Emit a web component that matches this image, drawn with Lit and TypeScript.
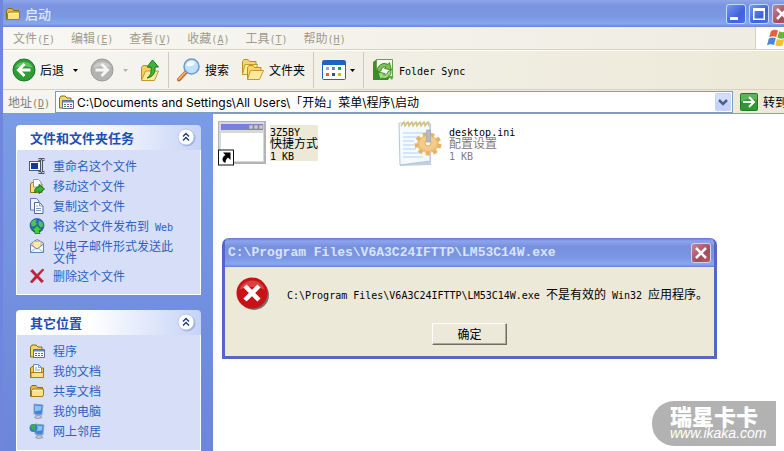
import { LitElement, html, css, svg, TemplateResult } from "lit";
import { customElement } from "lit/decorators.js";

/** Sets runs of Latin text in the half-width face, next to full-width Chinese. */
const mix = (text: string) =>
  text
    .split(/([\x20-\x7e]+)/)
    .filter((part) => part)
    .map((part) => (/^[\x20-\x7e]/.test(part) ? html`<span class="en">${part}</span>` : part));

const icon = (w: number, h: number, body: TemplateResult) =>
  html`<svg class="icon" width=${w} height=${h} viewBox="0 0 ${w} ${h}" aria-hidden="true">${body}</svg>`;

const folderShape = svg`
  <path d="M1.5 13.5V4.5L3 2.5h4l1.500 2h5v9z" fill="#e9b93c" stroke="#8f6a12"/>
  <path d="M2.500 13.500V7.500L4 6h10.500v6l-1 1.500z" fill="#fbe283" stroke="#a67c1c"/>
  <path d="M4 7.500h9" stroke="#fff6c4"/>`;

const programsShape = svg`
  <path d="M1.500 14V4L3 2h4l2 2h4v10z" fill="#f6d568" stroke="#8f6a12"/>
  <path d="M4.500 6.500h11v8h-11z" fill="#fff" stroke="#5f6f8f"/>
  <path d="M5 7h10v1.500H5z" fill="#5b8be0"/>
  <path d="M6 10h2v1H6zM6 12h2v1H6z" fill="#4f8f4f"/><path d="M9 10h2v1H9zM12 12h2v1h-2z" fill="#d0503c"/>
  <path d="M12 10h2v1h-2zM9 12h2v1H9z" fill="#4060c0"/>`;

const monitor = svg`
  <path d="M5 1l9 1-1.200 10-7.800-1z" fill="#3d86dd" stroke="#8fa2c4"/>
  <path d="M6 2.500l6.500.8-.6 4-5.900 1z" fill="#8cc4f8"/>
  <path d="M7 12l4 .3.5 1.200 1.500 1-5 1.300-2.500-1.500 1.500-.6z" fill="#c3c8d4" stroke="#70789a" stroke-width=".6"/>`;

const icons = {
  folder: () => icon(16, 16, folderShape),
  programs: () => icon(16, 16, programsShape),
  documents: () => icon(16, 16, svg`
    <path d="M1.500 14.500V5L3 3.500h2V14zM12 5h2.500v9.500h-13" fill="#f0c850" stroke="#8f6a12"/>
    <path d="M4.500 1.500h5l3 3v7h-8z" fill="#fff" stroke="#6f8fc0"/>
    <path d="M9.500 1.500v3h3M6 5h2M6 7h5" fill="none" stroke="#78a4e0"/>
    <path d="M2 9.500h12.500v5H2z" fill="#fbe283" stroke="#a67c1c"/>`),
  computer: () => icon(16, 16, monitor),
  network: () => icon(16, 16, svg`
    <g transform="translate(1 0)">${monitor}</g>
    <circle cx="4.500" cy="5" r="4" fill="#2f7fd0"/>
    <path d="M1 3.500c2-3 5-3 6-1.500L5.500 4l1.500 2-2 2.500L3.500 6z" fill="#3fae4a"/>`),
  rename: () => icon(16, 16, svg`
    <rect x=".5" y="3.500" width="11" height="9" fill="#fff" stroke="#4b5a7a"/>
    <rect x="2" y="5" width="7" height="6" fill="#123a9c"/>
    <path d="M9.500 1.500h2l1 1 1-1h2M12.500 3v11M9.500 14.500h2l1-1 1 1h2" fill="none" stroke="#4a5468" stroke-width="3"/>
    <path d="M9.500 1.500h2l1 1 1-1h2M12.500 3v11M9.500 14.500h2l1-1 1 1h2" fill="none" stroke="#c8d0e0"/>`),
  move: () => icon(16, 16, svg`
    <path d="M1.500 14.500v-9l1.500-1h3l1 1.500h6v8.500z" fill="#f9dd7c" stroke="#9a7420"/>
    <path d="M4.500 1.500h5l2.500 2.500v5H4.500z" fill="#fff" stroke="#8c9cb8"/>
    <path d="M6 15c-1-4 1-6 4-6V6.500l5.500 4.500L10 15.500V13c-2 0-3 .5-4 2z" fill="#35b62f" stroke="#166c17"/>`),
  copy: () => icon(16, 16, svg`
    <path d="M1.500 .5h6l2.500 2.500v9h-8.500z" fill="#eef4ff" stroke="#5d7aa8"/>
    <path d="M5.500 4.500h5l3.500 3.500v7.500H5.500z" fill="#fff" stroke="#4d6a9c"/>
    <path d="M10.500 4.500v3.500H14M7 8h2M7 10.500h5M7 12.500h5" fill="none" stroke="#7b9dd4"/>`),
  publish: () => icon(16, 16, svg`
    <circle cx="8" cy="7.500" r="7" fill="#2866c4" stroke="#1d4a8c" stroke-width=".7"/>
    <path d="M2 5c1-3 4-4 6-3.500L6.500 4l1.500 2-3 2.500L2.500 8zM10 2.500l3.500 2 1 3.500-3 1.500-2-3z" fill="#4fc256"/>
    <path d="M8 7.500l5 5h-2.800c0 1.500.4 2.300 1 3H6c-.6-1-.6-2-.5-3H3z" fill="#46cf3c" stroke="#17741b" stroke-width=".8"/>`),
  mail: () => icon(16, 16, svg`
    <path d="M1.500 6L8 1.500 14.500 5v9l-13 .5z" fill="#dbe8fb" stroke="#6482b0"/>
    <path d="M4 3.500h8v6L8 11 4 9z" fill="#ffe9b0" stroke="#d9a24a" stroke-width=".7"/>
    <path d="M1.500 6.500L8 11l6.500-5v8.500h-13z" fill="#f1f7ff" stroke="#6482b0"/>
    <path d="M2 14l5-4M14 14L9 10" stroke="#9ab2d8"/>`),
  remove: () => icon(16, 16, svg`
    <path d="M1.500 3l2-1.500L8 6.500 13.500 1l1.500.8L9.500 8l5 5-1.800 1.800L8 9.800 3 15l-1.700-1.200L6.300 8z" fill="#cc1f35" stroke="#8c1020" stroke-width=".5"/>`),
  chevrons: () => icon(19, 19, svg`
    <circle cx="10" cy="10" r="8.500" fill="#9fb2e0"/>
    <circle cx="9" cy="9" r="8" fill="#fff" stroke="#b9c6ea"/>
    <path d="M6 8.500l3-3 3 3M6 12.500l3-3 3 3" fill="none" stroke="#24407c" stroke-width="1.500"/>`),
  back: () => icon(24, 24, svg`
    <circle cx="12" cy="12" r="11" fill="#2d9e33" stroke="#1d7424"/>
    <path d="M3 10a9.500 9 0 0 1 18 0c-5-2-12-2-18 0z" fill="#7ccf7a" opacity=".7"/>
    <path d="M12.500 6L6.500 12l6 6M7 12h11.500" fill="none" stroke="#fff" stroke-width="3"/>`),
  forward: () => icon(24, 24, svg`
    <circle cx="12" cy="12" r="11" fill="#b3b3b1" stroke="#9b9b99"/>
    <path d="M3 10a9.500 9 0 0 1 18 0c-5-2-12-2-18 0z" fill="#d2d2d0" opacity=".8"/>
    <path d="M11.500 6l6 6-6 6M17 12H5.500" fill="none" stroke="#f6f6f4" stroke-width="3"/>`),
  up: () => icon(20, 24, svg`
    <path d="M1.500 21.500V9.500L3 7.500h4l1.500 2h6v12z" fill="#f4cf5c" stroke="#b98e22"/>
    <path d="M1.500 22.500l4-9.500H18.500l-4 9.500z" fill="#fdea9c" stroke="#c49a2c"/>
    <path d="M7 20c4-2 4.500-7 4-11H7L12.500 2 18.500 9H15c.5 6-2 10-8 11z" fill="#3fb53a" stroke="#1b7a20"/>`),
  search: () => icon(24, 24, svg`
    <path d="M9 14l-7 7.500" stroke="#b9672c" stroke-width="4" stroke-linecap="round"/>
    <path d="M8.500 14l-6.500 7" stroke="#f0a866" stroke-width="2" stroke-linecap="round"/>
    <circle cx="14.500" cy="8.500" r="7.500" fill="#bfe0fb" stroke="#6f97cf" stroke-width="1.500"/>
    <path d="M9.500 8a5 5 0 0 1 9-3c-2 3-5 3.500-9 3z" fill="#fff" opacity=".85"/>`),
  folders: () => icon(24, 24, svg`
    <path d="M1.500 16.500V3.500L3 1.500h4l1.500 2H15v4l-3 9z" fill="#f6d468" stroke="#b98e22"/>
    <path d="M1.500 16.500L4 6.500h12.500l-3 10z" fill="#fdeaa0" stroke="#c49a2c"/>
    <path d="M6.500 21.500V9.500L8 7.500h4l1.500 2H20v4z" fill="#f6d468" stroke="#b98e22"/>
    <path d="M6.500 21.500l3-9h13l-4 9z" fill="#fdeaa0" stroke="#c49a2c"/>`),
  views: () => icon(24, 20, svg`
    <rect x=".5" y=".5" width="23" height="19" rx="1" fill="#fff" stroke="#2a62b8"/>
    <path d="M1 1h22v4H1z" fill="#1c62cc"/>
    <path d="M4 7h3v3H4z" fill="#a99ad0"/><path d="M10 7h3v3h-3z" fill="#6a86d8"/><path d="M16 7h3v3h-3z" fill="#2f9a3c"/>
    <path d="M4 13h3v3H4z" fill="#e2603c"/><path d="M10 13h3v3h-3z" fill="#234fae"/><path d="M16 13h3v3h-3z" fill="#d8b040"/>`),
  sync: () => icon(23, 24, svg`
    <path d="M1 4l4-3v17l-4 4z" fill="#3f8f2c"/>
    <path d="M4.500 1.500h16v17h-16z" fill="#f4faee" stroke="#5ea548"/>
    <path d="M1 22V7c4 6 9 10 17 12l-2 3z" fill="#3b8c2c"/>
    <path d="M5.500 14A7 7 0 0 1 16 6.500l1.500-2 2 7.500-7-1.500 1.500-1.500a4 4 0 0 0-5 4z" fill="#7cc24e" stroke="#2f7a24" stroke-width=".8"/>
    <path d="M19 12a7 7 0 0 1-9.500 8L8 21.500 6 14l7 1.500-1.500 1.500a4 4 0 0 0 4.500-3.500z" fill="#a6d977" stroke="#2f7a24" stroke-width=".8"/>
    <path d="M15 17l6.500 1.500L20 22z" fill="#58a83c"/>`),
  go: () => icon(18, 18, svg`
    <rect x=".5" y=".5" width="17" height="17" rx="1" fill="#2f9a34" stroke="#1f7a28"/>
    <path d="M1 1h16v6C11 5 6 6 1 9z" fill="#6cc068" opacity=".7"/>
    <path d="M9 4l5 5-5 5M13.500 9H3" fill="none" stroke="#fff" stroke-width="2"/>`),
  drop: () => icon(16, 18, svg`
    <rect width="16" height="18" rx="2" fill="#c3d3fb"/>
    <path d="M1 1h14v8H1z" fill="#d3defc"/>
    <path d="M4 7l4 4 4-4" fill="none" stroke="#4d6185" stroke-width="2.500"/>`),
  caret: () => icon(5, 3, svg`<path d="M0 0h5L2.500 3z" fill="currentColor"/>`),
  minimize: () => icon(20, 20, svg`<path d="M4 13h8v3H4z" fill="#fff"/>`),
  maximize: () => icon(20, 20, svg`<path d="M4 4h12v12H4zM5.500 7v7.500h9V7z" fill="#fff" fill-rule="evenodd"/>`),
  close: () => icon(20, 20, svg`<path d="M5 5l10 10M15 5L5 15" stroke="#fff" stroke-width="2.500"/>`),
  flag: () => icon(25, 20, svg`
    <path d="M5 3c3-2 5-1.500 7-.5l-1.800 6.500c-2-1-4-1.300-7 .2z" fill="#e8603c"/>
    <path d="M13.200 3.200c2.500 1.300 5 1.300 7.300 0L18.600 10c-2.500 1-4.500 1-7.200-.5z" fill="#6cb33e"/>
    <path d="M2.800 10.500c3-1.500 5-1 7-.2L8 17c-2-1-4-1.300-7 .2z" fill="#4a84dc"/>
    <path d="M11 10.700c2.500 1.300 5 1.300 7.300.2L16.500 17.500c-2.500 1-4.500 1-7.300-.3z" fill="#f3c02e"/>`),
  error: () => icon(34, 34, svg`
    <circle cx="18" cy="18" r="15" fill="#77716a"/>
    <circle cx="16" cy="16" r="15.500" fill="#c81218"/>
    <path d="M3 13a13.500 13 0 0 1 26 0c-7-4-19-4-26 0z" fill="#e8605c" opacity=".6"/>
    <path d="M9 9l14 14M23 9L9 23" stroke="#fff" stroke-width="4.500"/>`),
  shortcut: () => icon(48, 46, svg`
    <path d="M0 1h48v43H0z" fill="#b4b4b6"/>
    <path d="M1 2h45v40H1z" fill="#d8d8dc"/>
    <path d="M3 4h42v6H3z" fill="#7b7fdc"/>
    <path d="M31 5h4v4h-4zM36 5h4v4h-4zM41 5h4v4h-4z" fill="#c8c8cc" stroke="#8c8c94" stroke-width=".6"/>
    <path d="M3 13h42v28H3z" fill="#fff"/>
    <rect x=".5" y="30" width="15" height="15" fill="#fff" stroke="#111"/>
    <path d="M5 32.500h7.500V40l-2.500-2.500C8 39 7.500 40.500 7.500 43 3 41 4 37 7.500 35z" fill="#000"/>`),
  settings: () => icon(48, 48, svg`
    <path d="M3 4l31 1v41L3 47z" fill="#c4cede"/>
    <path d="M2 4h31v38L3 46z" fill="#f4faff" stroke="#b4c6e0"/>
    <path d="M6 14h23M6 18h15M6 22h11M6 26h11M6 30h13M6 34h17M6 38h20" stroke="#b4cff2"/>
    <path d="M4 7l3-4 1 4 3-4 1 4 3-4 1 4 3-4 1 4 3-4 1 4 3-4 1 4 3-4 1 4" fill="none" stroke="#d3c078" stroke-width="1.300"/>
    <ellipse cx="31" cy="25" rx="11" ry="9" fill="#efc27a"/>
    <ellipse cx="31" cy="25" rx="11.500" ry="9.500" fill="none" stroke="#e6b264" stroke-width="4" stroke-dasharray="4 3.360"/>
    <ellipse cx="31" cy="24" rx="8.500" ry="7" fill="#f3cc8a"/>
    <circle cx="31" cy="24" r="3" fill="#fbf2dc" stroke="#d6a456" stroke-width=".8"/>
    <path d="M29.500 11h4v12h-4z" fill="#b5bac6" stroke="#9aa0ae" stroke-width=".6"/>`),
};

const menus: [string, string][] = [
  ["文件", "F"], ["编辑", "E"], ["查看", "V"], ["收藏", "A"], ["工具", "T"], ["帮助", "H"],
];

const panels = [
  {
    title: "文件和文件夹任务",
    links: [
      [icons.rename, "重命名这个文件"],
      [icons.move, "移动这个文件"],
      [icons.copy, "复制这个文件"],
      [icons.publish, "将这个文件发布到 Web"],
      [icons.mail, "以电子邮件形式发送此文件"],
      [icons.remove, "删除这个文件"],
    ] as [() => TemplateResult, string][],
  },
  {
    title: "其它位置",
    links: [
      [icons.programs, "程序"],
      [icons.documents, "我的文档"],
      [icons.folder, "共享文档"],
      [icons.computer, "我的电脑"],
      [icons.network, "网上邻居"],
    ] as [() => TemplateResult, string][],
  },
];

const files = [
  { icon: icons.shortcut, name: "3Z5BY", kind: "快捷方式", size: "1 KB", selected: true },
  { icon: icons.settings, name: "desktop.ini", kind: "配置设置", size: "1 KB", selected: false },
];

@customElement("app-root")
export class AppRoot extends LitElement {
  static styles = css`
    :host {
      display: block;
      position: relative;
      min-height: 100vh;
      overflow: hidden;
      background: #fff;
      color: #000;
      font: 12px/16px "Noto Sans CJK SC", sans-serif;
    }
    * { box-sizing: border-box; }
    button {
      margin: 0; padding: 0; border: 0; background: none;
      color: inherit; font: inherit; white-space: nowrap;
    }
    a { color: inherit; text-decoration: none; }
    .icon { display: block; flex: none; }
    .en { font-family: "DejaVu Sans Mono", monospace; font-size: 10px; line-height: 0; }

    /* The window runs past the right edge of the screen. */
    .window {
      width: calc(100% + 16px);
      min-height: 100vh;
      display: flex;
      flex-direction: column;
      border: solid #6f86dc;
      border-width: 0 4px 0 3px;
    }
    .title {
      display: flex; align-items: center; gap: 4px;
      height: 27px; padding: 0 4px 0 2px;
      background: linear-gradient(#8fa6ea 0, #7b93e0 20%, #7c97e2 60%, #84a8ec 88%, #6c84cc 100%);
      color: #dfe8fb;
    }
    .title h1 { flex: 1; margin: 0; font-size: 13px; font-weight: 500; line-height: 20px; }
    .controls { display: flex; gap: 3px; }
    .control {
      width: 20px; height: 20px; overflow: hidden;
      display: grid; place-items: center;
      border-radius: 3px; box-shadow: inset 0 0 0 1px #c8d4f8;
      background: linear-gradient(135deg, #7c9cf0, #3f62dc 60%, #4a70e6);
    }
    .control.close { background: linear-gradient(135deg, #c98a9c, #a84a5c 60%, #b45c70); }

    .menubar {
      display: flex; align-items: stretch;
      height: 23px;
      background: linear-gradient(90deg, #f8f7f3, #eeece1);
      border-bottom: 1px solid #d8d2bd;
      color: #9f9b8e;
    }
    .menus { flex: 1; display: flex; gap: 16px; padding-left: 10px; }
    .brand { width: 41px; padding: 1px 10px; background: #fff; border-left: 1px solid #d8d2bd; }

    .toolbar {
      display: flex; align-items: center;
      height: 40px; padding-left: 9px;
      background: linear-gradient(90deg, #f6f5f1, #ece9d8);
      border-top: 1px solid #fff;
      border-bottom: 1px solid #d8d2bd;
    }
    .tool { display: flex; align-items: center; gap: 4px; height: 32px; }
    .tool.off { color: #b8b5a8; }
    .tool.list { padding: 0 12px 0 9px; }
    .tool.next { margin-left: 12px; }
    .rule { width: 1px; height: 36px; margin: 0 8px; background: #cfccbd; }

    .address {
      display: flex; align-items: center; gap: 5px;
      height: 23px; padding-left: 5px;
      background: linear-gradient(90deg, #f6f5f1, #ece9d8);
    }
    .address label { color: #858273; width: 42px; white-space: nowrap; }
    .combo {
      flex: 1; min-width: 0; height: 22px;
      display: flex; align-items: center; gap: 3px; padding: 0 1px 0 2px;
      background: #fff; border: 1px solid #7f9db9;
    }
    .combo input {
      flex: 1; min-width: 0; height: 18px; padding: 0; border: 0; outline: 0;
      background: none; color: #000;
      font: 12px/16px Inter, "Noto Sans CJK SC", sans-serif;
    }
    .go { display: flex; align-items: center; gap: 5px; width: 58px; padding-left: 2px; overflow: hidden; }

    .body { flex: 1; display: flex; }
    .side {
      width: 210px; flex: none;
      display: flex; flex-direction: column; gap: 15px;
      padding: 12px 12px 0 13px;
      background: linear-gradient(#7a9ce4, #6c86da);
    }
    .panel { display: flex; flex-direction: column; }
    .panel:last-child { flex: 1; }
    .panel header {
      display: flex; align-items: center; justify-content: space-between;
      height: 25px; padding: 0 5px 0 14px;
      border-radius: 4px 4px 0 0;
      background: linear-gradient(90deg, #fff 40%, #c6d3f7);
      color: #215dc6;
    }
    .panel h2 { margin: 0; font-size: 13px; line-height: 20px; font-weight: 700; color: #1c4fb4; }
    .panel ul {
      flex: 1; margin: 0; padding: 8px 24px 10px 12px; list-style: none;
      display: flex; flex-direction: column; gap: 4px;
      background: #d6dff7; border: solid #fff; border-width: 0 1px 1px;
      color: #2a5fc4;
    }
    .panel a { display: flex; gap: 8px; min-height: 16px; line-height: 12px; }
    .panel a span.text { padding-top: 2px; }

    .files {
      flex: 1; margin: 0; padding: 5px; list-style: none;
      display: grid; grid-template-columns: repeat(auto-fill, 179px); align-content: start;
      background: #fff; border-top: 1px solid #8c9cc0;
    }
    .file { display: flex; align-items: center; gap: 4px; line-height: 12px; }
    .file .info { display: flex; flex-direction: column; color: #808080; }
    .file .info b { font-weight: 400; color: #000; }
    .file.selected .info { background: #ece9d8; color: #000; }

    .dialog {
      position: absolute; left: 222px; top: 238px; width: 495px;
      border: solid #5566c6; border-width: 0 3px 3px;
      border-radius: 7px 7px 0 0;
      background: #ece9d8;
      overflow: hidden;
    }
    .dialog header {
      display: flex; align-items: center; justify-content: space-between;
      height: 29px; margin: 0 -3px; padding: 0 6px;
      background: linear-gradient(#6478cc 0, #8ba5ec 10%, #7890de 30%, #7c97e4 70%, #87a9f0 90%, #6a82cc 100%);
    }
    .dialog h2 {
      margin: 0; color: #d8e4fa;
      font: bold 13px/20px "Liberation Mono", monospace;
    }
    .message { display: flex; align-items: center; gap: 17px; padding: 10px 0 0 11px; }
    .message p { margin: 0; white-space: nowrap; }
    .actions { display: flex; justify-content: center; padding: 12px 0 11px; }
    .ok {
      width: 75px; height: 22px; background: #ece9d8;
      border: 1px solid; border-color: #fff #716f64 #716f64 #fff;
      box-shadow: inset -1px -1px #aca899;
    }

    .mark {
      position: absolute; right: 8px; bottom: 5px;
      width: 124px; height: 45px; padding: 4px 0 0 18px;
      border-radius: 22px 0 0 22px;
      background: #b2b2b2; color: #fff;
      display: flex; flex-direction: column;
    }
    .mark strong { font-size: 22px; line-height: 20px; font-weight: 900; }
    .mark em { font: italic 14px/16px "Liberation Sans", sans-serif; }
  `;

  render() {
    return html`
      <div class="window">
        <header class="title">
          ${icons.folder()}
          <h1>启动</h1>
          <div class="controls">
            <button class="control" aria-label="最小化">${icons.minimize()}</button>
            <button class="control" aria-label="最大化">${icons.maximize()}</button>
            <button class="control close" aria-label="关闭">${icons.close()}</button>
          </div>
        </header>

        <div class="menubar">
          <nav class="menus">
            ${menus.map(([name, key]) => html`<button>${name}<span class="en">(<u>${key}</u>)</span></button>`)}
          </nav>
          <div class="brand">${icons.flag()}</div>
        </div>

        <div class="toolbar">
          <button class="tool">${icons.back()}后退</button>
          <button class="tool list" aria-label="后退列表">${icons.caret()}</button>
          <button class="tool off" aria-label="前进">${icons.forward()}</button>
          <button class="tool off list" aria-label="前进列表">${icons.caret()}</button>
          <button class="tool" aria-label="向上">${icons.up()}</button>
          <span class="rule"></span>
          <button class="tool">${icons.search()}搜索</button>
          <button class="tool next">${icons.folders()}文件夹</button>
          <span class="rule"></span>
          <button class="tool" aria-label="查看">${icons.views()}${icons.caret()}</button>
          <span class="rule"></span>
          <button class="tool">${icons.sync()}<span>${mix("Folder Sync")}</span></button>
        </div>

        <div class="address">
          <label for="path">地址<span class="en">(<u>D</u>)</span></label>
          <div class="combo">
            ${icons.programs()}
            <input id="path" type="text" .value=${"C:\\Documents and Settings\\All Users\\「开始」菜单\\程序\\启动"} />
            <button aria-label="打开列表">${icons.drop()}</button>
          </div>
          <button class="go">${icons.go()}转到</button>
        </div>

        <div class="body">
          <aside class="side">
            ${panels.map(
              (panel) => html`
                <section class="panel">
                  <header>
                    <h2>${panel.title}</h2>
                    <button aria-label="折叠">${icons.chevrons()}</button>
                  </header>
                  <ul>
                    ${panel.links.map(
                      ([picture, text]) => html`<li><a href="#">${picture()}<span class="text">${mix(text)}</span></a></li>`
                    )}
                  </ul>
                </section>
              `
            )}
          </aside>
          <ul class="files">
            ${files.map(
              (file) => html`
                <li class="file ${file.selected ? "selected" : ""}">
                  ${file.icon()}
                  <div class="info"><b>${mix(file.name)}</b><span>${file.kind}</span><span>${mix(file.size)}</span></div>
                </li>
              `
            )}
          </ul>
        </div>
      </div>

      <section class="dialog" role="alertdialog" aria-labelledby="dialog-title" aria-describedby="dialog-text">
        <header>
          <h2 id="dialog-title">C:\\Program Files\\V6A3C24IFTTP\\LM53C14W.exe</h2>
          <button class="control close" aria-label="关闭">${icons.close()}</button>
        </header>
        <div class="message">
          ${icons.error()}
          <p id="dialog-text">${mix("C:\\Program Files\\V6A3C24IFTTP\\LM53C14W.exe 不是有效的 Win32 应用程序。")}</p>
        </div>
        <div class="actions"><button class="ok">确定</button></div>
      </section>

      <div class="mark"><strong>瑞星卡卡</strong><em>www.ikaka.com</em></div>
    `;
  }
}
